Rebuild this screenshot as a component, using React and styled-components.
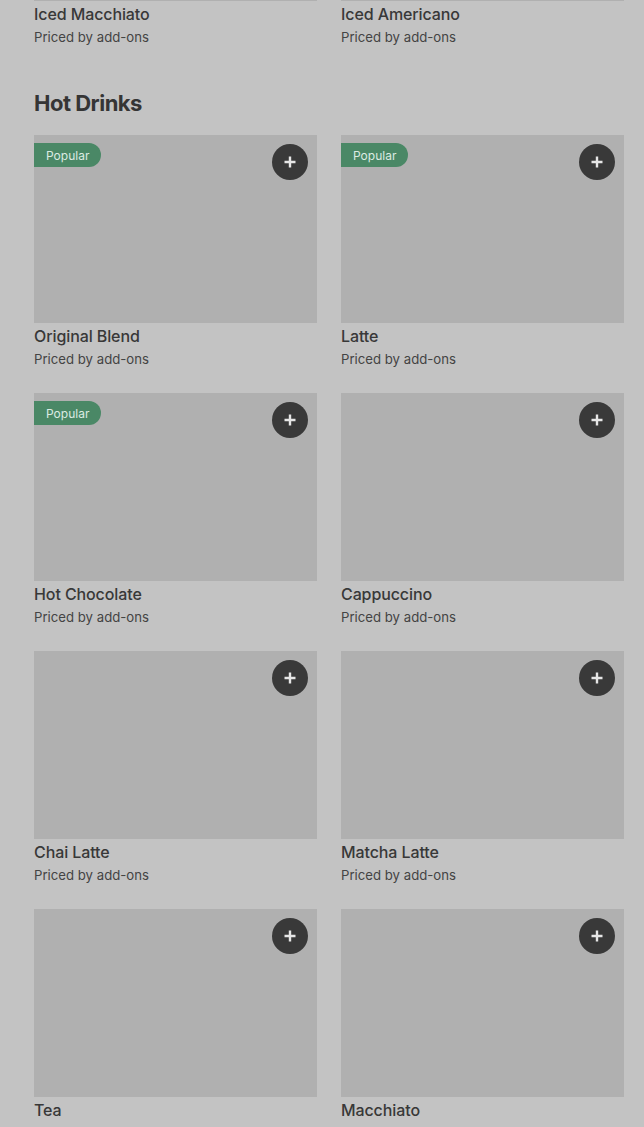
import React from 'react';
import styled, { createGlobalStyle } from 'styled-components';

const GlobalStyle = createGlobalStyle`
  html, body {
    margin: 0;
    padding: 0;
    background: #c3c3c3;
    font-family: Inter, "Noto Sans", sans-serif;
    color: #383838;
    overflow: hidden;
  }
`;

const Page = styled.div`
  padding: 0 20px 0 34px;
  margin-top: -187px;
`;

const Section = styled.section`
  margin-bottom: 40px;
`;

const SectionTitle = styled.h2`
  font-size: 22px;
  font-weight: 700;
  letter-spacing: -0.5px;
  line-height: 32px;
  margin: 0 0 16px;
  color: #353535;
`;

const Grid = styled.div`
  display: grid;
  grid-template-columns: 1fr 1fr;
  column-gap: 24px;
  row-gap: 24px;
`;

const Card = styled.div`
  display: flex;
  flex-direction: column;
`;

const Thumb = styled.div`
  position: relative;
  height: 188px;
  background: #b0b0b0;
`;

const Badge = styled.span`
  position: absolute;
  left: 0;
  top: 8px;
  height: 24px;
  padding: 0 12px;
  display: flex;
  align-items: center;
  background: #4a8866;
  color: #dcebe2;
  font-size: 12px;
  border-radius: 0 12px 12px 0;
`;

const AddButton = styled.button`
  position: absolute;
  top: 9px;
  right: 9px;
  width: 36px;
  height: 36px;
  border-radius: 50%;
  border: none;
  padding: 0;
  background: #393939;
  display: flex;
  align-items: center;
  justify-content: center;
  cursor: pointer;
`;

const Name = styled.div`
  margin-top: 1px;
  font-size: 16px;
  font-weight: 500;
  line-height: 24px;
  letter-spacing: -0.1px;
`;

const Price = styled.div`
  margin-top: 1px;
  font-size: 13.2px;
  line-height: 20px;
  color: #444;
`;

const PlusIcon = () => (
  <svg width="14" height="14" viewBox="0 0 14 14">
    <path d="M7 1.5v11M1.5 7h11" stroke="#e6e6e6" strokeWidth="2.4" />
  </svg>
);

const icedTail = ['Iced Macchiato', 'Iced Americano'];

const hotDrinks = [
  { name: 'Original Blend', popular: true },
  { name: 'Latte', popular: true },
  { name: 'Hot Chocolate', popular: true },
  { name: 'Cappuccino' },
  { name: 'Chai Latte' },
  { name: 'Matcha Latte' },
  { name: 'Tea' },
  { name: 'Macchiato' },
];

const Item = ({ name, popular }) => (
  <Card>
    <Thumb>
      {popular && <Badge>Popular</Badge>}
      <AddButton aria-label={`Add ${name}`}>
        <PlusIcon />
      </AddButton>
    </Thumb>
    <Name>{name}</Name>
    <Price>Priced by add-ons</Price>
  </Card>
);

export default function App() {
  return (
    <>
      <GlobalStyle />
      <Page>
        <Section>
          <Grid>
            {icedTail.map((n) => (
              <Item key={n} name={n} />
            ))}
          </Grid>
        </Section>
        <Section>
          <SectionTitle>Hot Drinks</SectionTitle>
          <Grid>
            {hotDrinks.map((d) => (
              <Item key={d.name} {...d} />
            ))}
          </Grid>
        </Section>
      </Page>
    </>
  );
}
